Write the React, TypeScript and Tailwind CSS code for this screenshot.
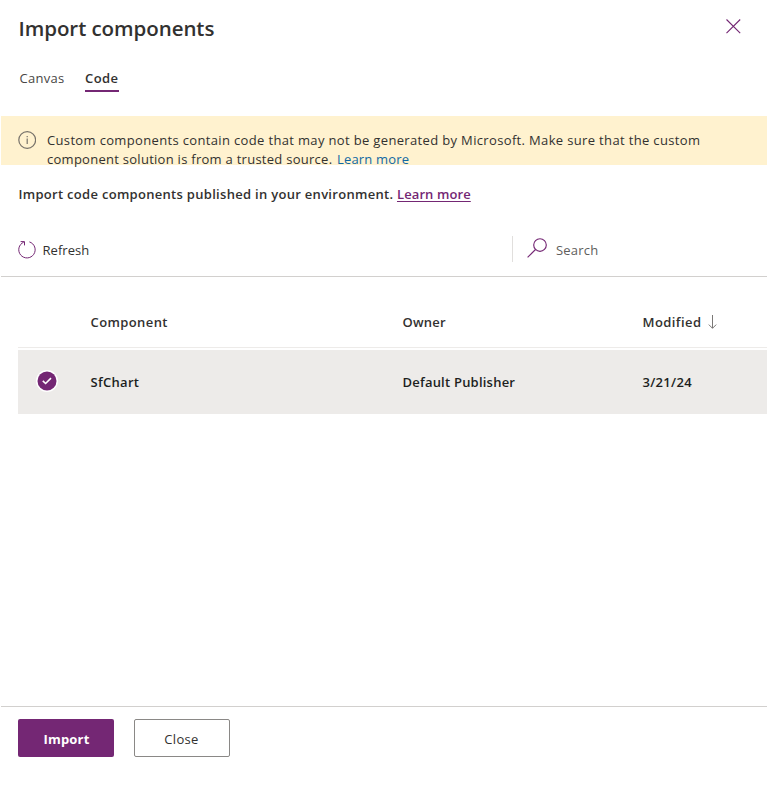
import React from 'react';

function CloseIcon() {
  return (
    <svg width="16" height="16" viewBox="0 0 16 16" fill="none" stroke="#742774" strokeWidth="1.1">
      <path d="M1.5 .5L15.2 14.2M15.2 .5L1.5 14.2" />
    </svg>
  );
}

function InfoIcon() {
  return (
    <svg width="18" height="18" viewBox="0 0 18 18" fill="none" stroke="#77726a" strokeWidth="1.2">
      <circle cx="9.2" cy="9" r="8.4" />
      <path d="M9.2 7.5V13M9.2 5V6.2" />
    </svg>
  );
}

function RefreshIcon() {
  return (
    <svg width="18" height="18" viewBox="0 0 18 18" fill="none" stroke="#742774" strokeWidth="1">
      <path d="M11.4 .9A8.2 8.2 0 1 1 5.7 1.2M2.6 .6H6.5V4.4" />
    </svg>
  );
}

function SearchIcon() {
  return (
    <svg width="20" height="20" viewBox="0 0 20 20" fill="none" stroke="#742774" strokeWidth="1.15">
      <circle cx="13" cy="7" r="6.3" />
      <path d="M8.5 11.5L.6 19.4" />
    </svg>
  );
}

function SortIcon() {
  return (
    <svg width="10" height="14" viewBox="0 0 10 14" fill="none" stroke="#7a7876" strokeWidth="1">
      <path d="M4.5 0V13.2M.8 9.6L4.5 13.3L8.2 9.6" />
    </svg>
  );
}

function SelectedIcon() {
  return (
    <svg width="22" height="22" viewBox="0 0 22 22" fill="none">
      <circle cx="11" cy="11" r="11" fill="#fff" />
      <circle cx="11" cy="11" r="9.5" fill="#742774" />
      <path d="M6.8 10.8L9.6 13.5L15 8.1" stroke="#fff" strokeWidth="1.6" />
    </svg>
  );
}

const columns = 'grid grid-cols-[72.5px_312px_240px_1fr] items-center';

export default function App() {
  return (
    <main className="flex h-[786px] w-[768px] flex-col overflow-hidden bg-white px-px font-['Open_Sans','Noto_Sans',sans-serif] text-[13px] leading-[19px] text-[#323130]">
      <header className="flex h-[62px] shrink-0 justify-between pl-[17.5px] pr-[26px]">
        <h1 className="pt-[14px] text-[20.5px] font-semibold leading-[28px] tracking-[-0.06px]">Import components</h1>
        <button className="mt-[19px] h-4" aria-label="Close panel"><CloseIcon /></button>
      </header>

      <nav className="flex h-[54px] shrink-0 items-start gap-[21px] pl-[18px] pt-[7px]">
        <button className="flex h-[23px] w-[45px] items-start pl-[0.5px] tracking-[0.3px] text-[#484644]">Canvas</button>
        <button className="flex h-[23px] w-[34px] items-start border-b-2 border-[#742774] font-semibold tracking-[0.4px]">Code</button>
      </nav>

      <section className="flex h-[49px] shrink-0 gap-[11px] bg-[#fff2cf] pl-[17px] pt-[15px]">
        <div className="w-[18px] shrink-0"><InfoIcon /></div>
        <p className="whitespace-nowrap">
          <span className="tracking-[0.345px]">Custom components contain code that may not be generated by Microsoft. Make sure that the custom</span><br />
          <span className="tracking-[0.27px]">component solution is from a trusted source. </span>
          <a className="ml-[1px] tracking-[0.18px] text-[#1068a3]">Learn more</a>
        </p>
      </section>

      <p className="h-[69px] shrink-0 whitespace-nowrap pl-[17.5px] pt-[20px] font-semibold">
        <span className="tracking-[0.295px]">Import code components published in your environment. </span>
        <a className="tracking-[0.1px] text-[#742774] underline underline-offset-2">Learn more</a>
      </p>

      <div className="flex h-[43px] shrink-0 border-b border-[#d2d0ce] pl-[17px]">
        <button className="flex h-[32px] w-[494px] items-center gap-[6.5px]"><RefreshIcon /><span className="tracking-[0.05px]">Refresh</span></button>
        <div className="mt-[2px] flex h-[26px] items-center gap-[9px] border-l border-[#e1dfdd] pl-[14px] text-[#605e5c]">
          <span className="-mt-[3px]"><SearchIcon /></span><span className="mt-[2px] tracking-[0.2px]">Search</span>
        </div>
      </div>

      <section className="flex-1 pl-[17px] pt-[20px] font-semibold">
        <div className={`${columns} h-[51px] border-b border-[#edebe9]`}>
          <span /><span className="tracking-[0.4px]">Component</span><span className="tracking-[0.25px]">Owner</span>
          <span className="flex items-center gap-[7px]"><span className="tracking-[0.42px]">Modified</span><SortIcon /></span>
        </div>
        <div className={`${columns} mt-[2px] h-[64px] bg-[#edebe9] text-[#201f1e]`}>
          <span className="-mt-[2px] pl-[18.4px]"><SelectedIcon /></span>
          <span className="tracking-[0.3px]">SfChart</span>
          <span className="tracking-[0.22px]">Default Publisher</span>
          <span className="tracking-[0.3px]">3/21/24</span>
        </div>
      </section>

      <footer className="flex h-[80px] shrink-0 gap-5 border-t border-[#d2d0ce] pl-[17px] pt-[12px]">
        <button className="h-[38px] w-[96px] rounded-[2px] bg-[#742774] pl-[1px] pt-[2px] font-bold tracking-[0.2px] text-white">Import</button>
        <button className="h-[38px] w-[96px] rounded-[2px] border border-[#8a8886] pr-[1px] pt-[2px] font-medium tracking-[0.35px]">Close</button>
      </footer>
    </main>
  );
}
